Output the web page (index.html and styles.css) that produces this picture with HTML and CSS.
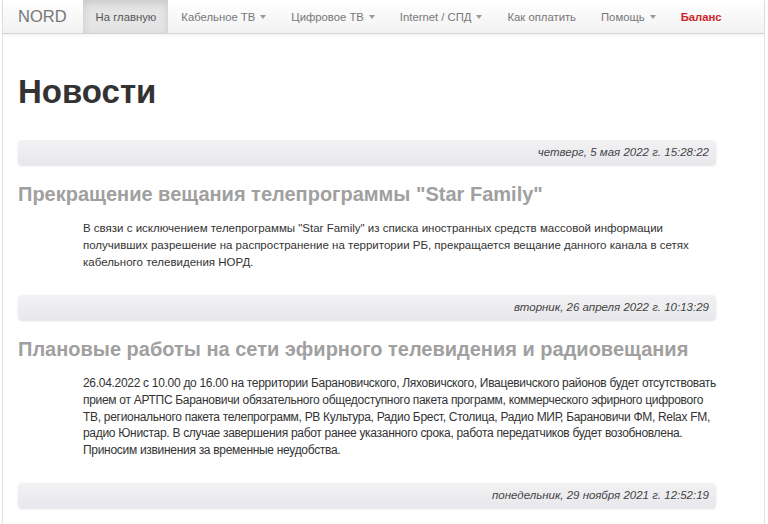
FILE: index.html
```html
<!DOCTYPE html>
<html lang="ru">
<head>
    <meta charset="UTF-8">
    <meta name="viewport" content="width=device-width, initial-scale=1.0">
    <title>NORD - Новости</title>
    <link rel="stylesheet" href="styles.css">
</head>
<body>

<div class="page">
    <div class="navbar">
        <a class="brand" href="#">NORD</a>
        <ul class="nav">
            <li class="active"><a href="#">На главную</a></li>
            <li><a href="#">Кабельное ТВ <b class="caret"></b></a></li>
            <li><a href="#">Цифровое ТВ <b class="caret"></b></a></li>
            <li><a href="#">Internet / СПД <b class="caret"></b></a></li>
            <li><a href="#">Как оплатить</a></li>
            <li><a href="#">Помощь <b class="caret"></b></a></li>
            <li class="balance"><a href="#">Баланс</a></li>
        </ul>
    </div>

    <div class="container">
        <h1>Новости</h1>

        <div class="news-date">четверг, 5 мая 2022 г. 15:28:22</div>
        <h2 class="news-title">Прекращение вещания телепрограммы "Star Family"</h2>
        <p class="news-text">В связи с исключением телепрограммы "Star Family" из списка иностранных средств массовой информации получивших разрешение на распространение на территории РБ, прекращается вещание данного канала в сетях кабельного телевидения НОРД.</p>

        <div class="news-date">вторник, 26 апреля 2022 г. 10:13:29</div>
        <h2 class="news-title">Плановые работы на сети эфирного телевидения и радиовещания</h2>
        <p class="news-text wide">26.04.2022 с 10.00 до 16.00 на территории Барановичского, Ляховичского, Ивацевичского районов будет отсутствовать<br>
        прием от АРТПС Барановичи обязательного общедоступного пакета программ, коммерческого эфирного цифрового<br>
        ТВ, регионального пакета телепрограмм, РВ Культура, Радио Брест, Столица, Радио МИР, Барановичи ФМ, Relax FM,<br>
        радио Юнистар. В случае завершения работ ранее указанного срока, работа передатчиков будет возобновлена.<br>
        Приносим извинения за временные неудобства.</p>

        <div class="news-date">понедельник, 29 ноября 2021 г. 12:52:19</div>
    </div>
</div>

</body>
</html>
```

FILE: styles.css
```css
body {
    margin: 0;
    font-family: 'Liberation Sans', Arial, sans-serif;
    font-size: 12px;
    color: #333333;
    background-color: #ffffff;
}
.page {
    margin: 0 3px 0 2px;
    min-height: 100vh;
    border-left: 1px solid #e4e4e4;
    border-right: 1px solid #e4e4e4;
}

/* Top navigation */
.navbar {
    display: flex;
    align-items: stretch;
    height: 33px;
    background: linear-gradient(#ffffff, #f2f2f2);
    border-bottom: 1px solid #d4d4d4;
    box-shadow: 0 1px 4px rgba(0, 0, 0, 0.065);
}
.brand {
    display: flex;
    align-items: center;
    padding: 0 16px 0 15px;
    font-size: 16.5px;
    color: #777777;
    text-decoration: none;
}
.nav {
    display: flex;
    list-style: none;
    margin: 0;
    padding: 0;
}
.nav li a {
    display: flex;
    align-items: center;
    height: 100%;
    padding: 0 12px 0 13px;
    font-size: 11.3px;
    white-space: nowrap;
    color: #777777;
    text-decoration: none;
}
.nav li.active a {
    background-color: #e5e5e5;
    color: #555555;
    box-shadow: inset 0 3px 8px rgba(0, 0, 0, 0.125);
}
.nav li.balance a {
    color: #d2232a;
    font-weight: bold;
}
.caret {
    display: inline-block;
    margin-left: 5px;
    border-top: 4px solid #999999;
    border-left: 3.5px solid transparent;
    border-right: 3.5px solid transparent;
}

/* Content */
.container {
    width: 698px;
    padding: 0 0 0 15px;
}
h1 {
    margin: 38px 0 28px;
    font-size: 33px;
    font-weight: bold;
    line-height: 40px;
    color: #333333;
}
.news-date {
    height: 25px;
    line-height: 25px;
    padding: 0 7px;
    text-align: right;
    font-style: italic;
    font-size: 11.5px;
    color: #444444;
    background: linear-gradient(#f2f2f4, #e8e8ec);
    border-radius: 4px;
    box-shadow: 0 1px 2px rgba(0, 0, 0, 0.12);
}
.news-title {
    margin: 16px 0 13px;
    font-size: 20px;
    line-height: 26px;
    font-weight: bold;
    color: #a0a0a0;
}
.news-text {
    margin: 0 0 25px 65px;
    font-size: 11.5px;
    line-height: 16.8px;
    color: #333333;
}
.news-text.wide {
    font-size: 12px;
    line-height: 16.6px;
    letter-spacing: -0.3px;
    white-space: nowrap;
}
```
